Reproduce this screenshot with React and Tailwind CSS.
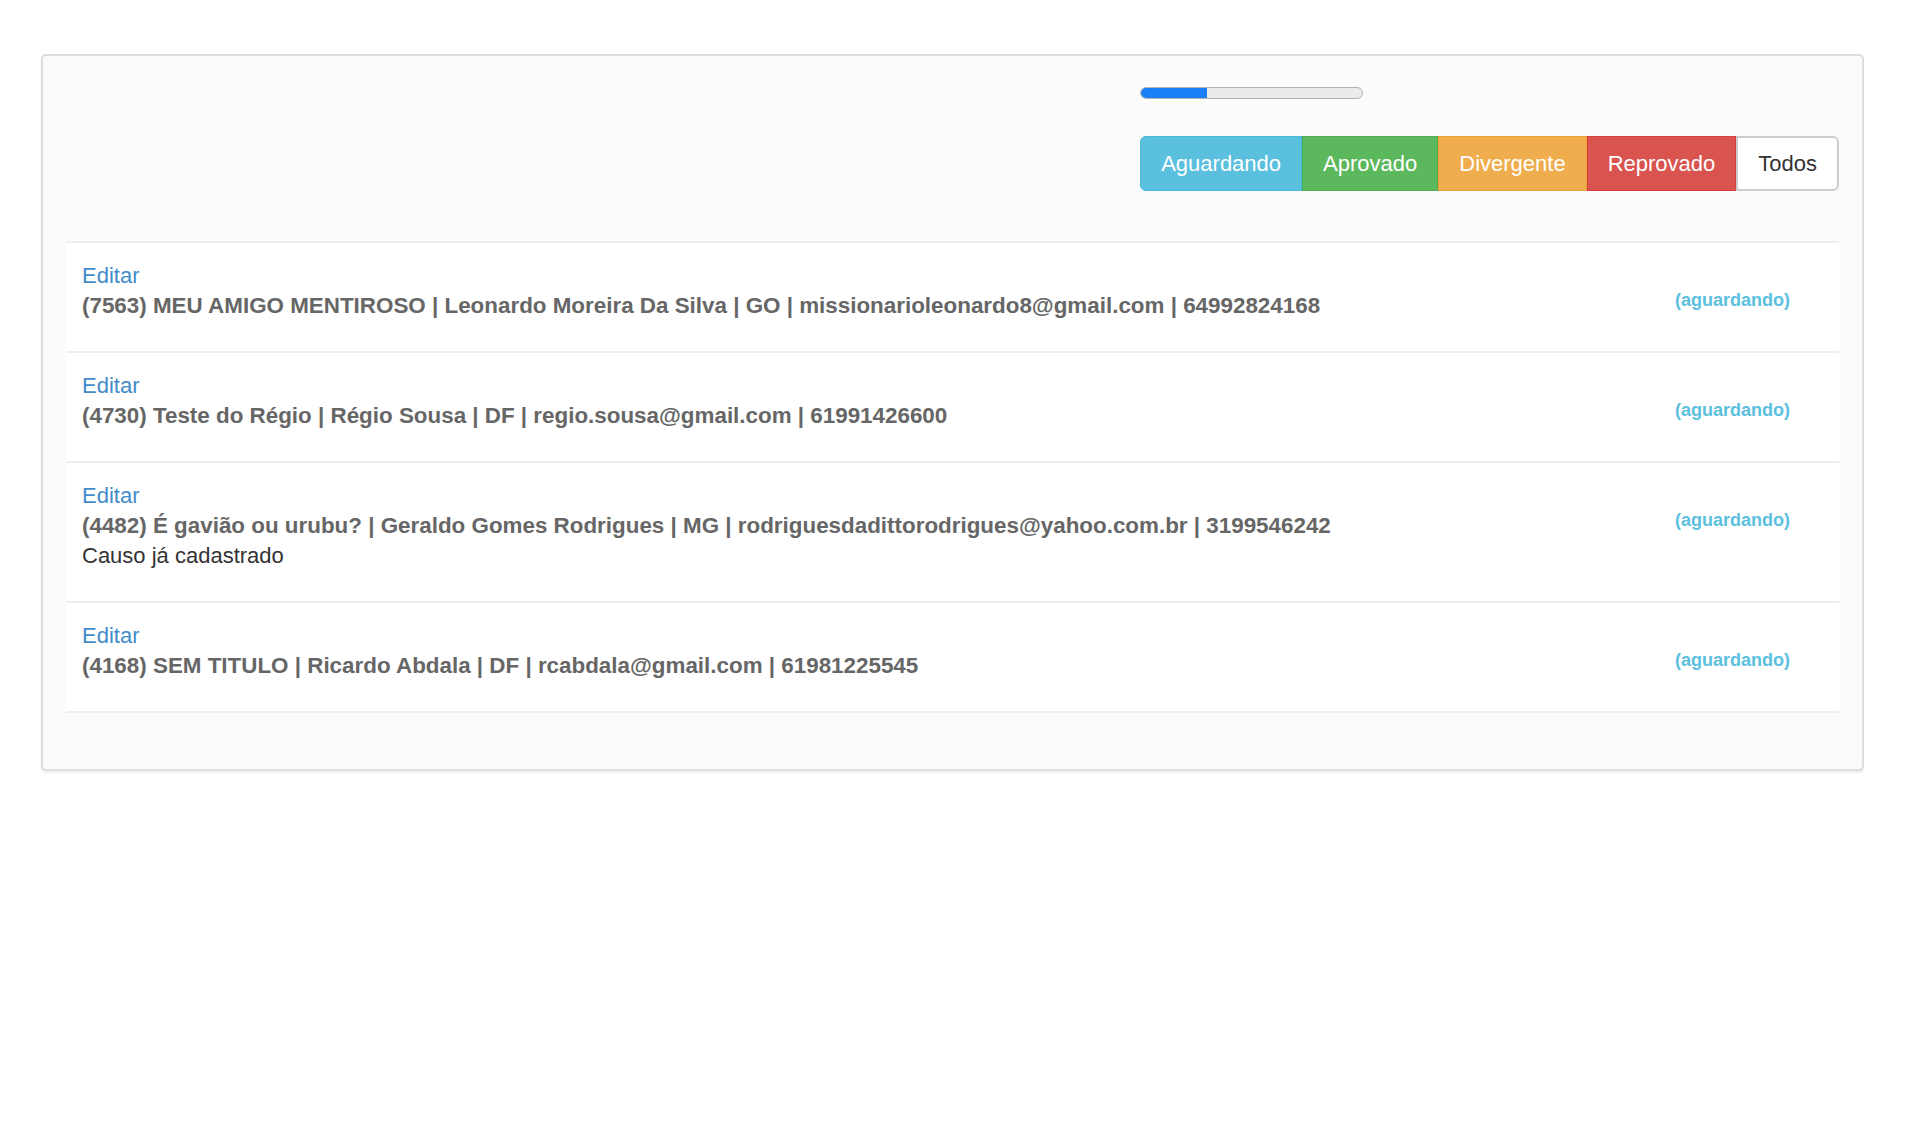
import React from "react";

const rows = [
  {
    edit: "Editar",
    title:
      "(7563) MEU AMIGO MENTIROSO | Leonardo Moreira Da Silva | GO | missionarioleonardo8@gmail.com | 64992824168",
    note: null,
  },
  {
    edit: "Editar",
    title: "(4730) Teste do Régio | Régio Sousa | DF | regio.sousa@gmail.com | 61991426600",
    note: null,
  },
  {
    edit: "Editar",
    title:
      "(4482) É gavião ou urubu? | Geraldo Gomes Rodrigues | MG | rodriguesdadittorodrigues@yahoo.com.br | 3199546242",
    note: "Causo já cadastrado",
  },
  {
    edit: "Editar",
    title: "(4168) SEM TITULO | Ricardo Abdala | DF | rcabdala@gmail.com | 61981225545",
    note: null,
  },
];

export default function App() {
  return (
    <div className="min-h-screen bg-white pt-[54px] pl-[41px] pr-[66px] font-['Liberation_Sans',Arial,Helvetica,sans-serif]">
      <div className="rounded-[5px] border-2 border-[#dddddd] bg-[#fbfbfb] shadow-[0_2px_2px_rgba(0,0,0,0.07)] px-[23px] pt-[31px] pb-[56px]">
        <div className="flex justify-end">
          <div className="flex flex-col items-start">
            <div className="h-[12px] w-[223px] rounded-full border border-[#b3b3b3] bg-[#ebebeb] overflow-hidden">
              <div className="h-full w-[30%] bg-[#1b7ff5]"></div>
            </div>
            <div className="mt-[37px] flex text-[22px] leading-[29px]">
              <button className="rounded-l-[6px] border border-[#46b8da] bg-[#5bc0de] px-5 py-3 text-white">
                Aguardando
              </button>
              <button className="border border-[#4cae4c] bg-[#5cb85c] px-5 py-3 text-white">
                Aprovado
              </button>
              <button className="border border-[#eea236] bg-[#f0ad4e] px-5 py-3 text-white">
                Divergente
              </button>
              <button className="border border-[#d43f3a] bg-[#d9534f] px-5 py-3 text-white">
                Reprovado
              </button>
              <button className="rounded-r-[6px] border-2 border-[#cccccc] bg-white px-5 py-[11px] text-[#333333]">
                Todos
              </button>
            </div>
          </div>
        </div>

        <div className="mt-[50px] border-b-2 border-[#eeeeee]">
          {rows.map((r, i) => (
            <div
              key={i}
              className="flex justify-between border-t-2 border-[#eeeeee] bg-white pl-4 pt-[18px] pb-[30px] pr-[49px]"
            >
              <div className="text-[22px] leading-[30px]">
                <div className="text-[#428bca]">{r.edit}</div>
                <div className="text-[22.4px] font-bold text-[#666666]">{r.title}</div>
                {r.note && <div className="text-[#333333]">{r.note}</div>}
              </div>
              <div className="mt-[26px] text-[18px] leading-[26px] font-bold text-[#5bc0de]">
                (aguardando)
              </div>
            </div>
          ))}
        </div>
      </div>
    </div>
  );
}
